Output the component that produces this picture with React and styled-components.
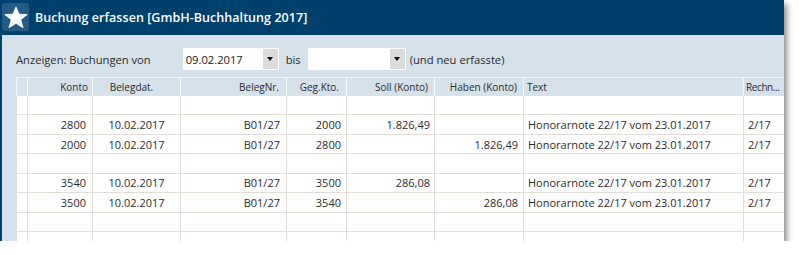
import React from "react";
import styled, { createGlobalStyle } from "styled-components";

const GlobalStyle = createGlobalStyle`
  body {
    margin: 0;
    background: #ffffff;
    font-family: "Open Sans", "Noto Sans", sans-serif;
  }
`;

const COLS = "11px 65px 88px 106px 60px 88px 89px 220px 40px";

const Window = styled.div`
  width: 784px;
  height: 241px;
  display: flex;
  flex-direction: column;
  overflow: hidden;
  border-left: 2px solid #00406c;
  box-sizing: border-box;
  box-shadow: 3px 4px 6px rgba(0, 0, 0, 0.45);
  background: #d5e1eb;
`;

const TitleBar = styled.div`
  height: 35px;
  flex: 0 0 35px;
  background: #00406c;
  display: flex;
  align-items: center;
  gap: 6px;
`;

const IconBox = styled.div`
  width: 27px;
  height: 28px;
  margin-top: -1px;
  border-radius: 3px;
  background: #235b85;
  display: flex;
  align-items: center;
  justify-content: center;
`;

const Title = styled.span`
  color: #ffffff;
  font-size: 12.5px;
  font-weight: 600;
  letter-spacing: 0.05px;
`;

const Body = styled.div`
  flex: 1;
  padding: 13px 0 0 14px;
  display: flex;
  flex-direction: column;
  gap: 7px;
`;

const FilterRow = styled.div`
  display: flex;
  align-items: center;
  height: 22px;
  font-size: 11.2px;
  color: #2b2b2b;
`;

const Label = styled.span`
  margin-right: ${(p) => p.$gap || 0}px;
`;

const Combo = styled.div`
  width: ${(p) => p.$width}px;
  height: 22px;
  box-sizing: border-box;
  background: #fff;
  display: flex;
  align-items: center;
  justify-content: space-between;
  padding: 1px 1px 1px 3px;
  margin-right: ${(p) => p.$gap}px;
  font-size: 11.2px;
  color: #222;
`;

const ComboButton = styled.div`
  width: 15px;
  height: 20px;
  background: #dcdcdc;
  display: flex;
  align-items: center;
  justify-content: center;
  &::after {
    content: "";
    border-left: 3.5px solid transparent;
    border-right: 3.5px solid transparent;
    border-top: 4px solid #111;
  }
`;

const Table = styled.div`
  display: flex;
  flex-direction: column;
  background: #fff;
  font-size: 11px;
  color: #2b2b2b;
`;

const HeadRow = styled.div`
  display: grid;
  grid-template-columns: ${COLS};
  height: 19px;
  background: #d5e1eb;
  border-top: 1px solid #f2f6f9;
  box-sizing: border-box;
`;

const HeadCell = styled.div`
  font-size: 10px;
  color: #2b2b2b;
  display: flex;
  align-items: center;
  justify-content: ${(p) => p.$align || "flex-start"};
  padding: 0 ${(p) => p.$pr ?? 4}px 0 ${(p) => p.$pl ?? 4}px;
  border-left: 1px solid #f4f7fa;
  white-space: nowrap;
  min-width: 0;
  letter-spacing: ${(p) => (p.$tight ? "-0.4px" : "normal")};
`;

const Row = styled.div`
  display: grid;
  grid-template-columns: ${COLS};
  height: 19.45px;
  box-sizing: border-box;
  border-bottom: 1px solid #e2ddd6;
`;

const Cell = styled.div`
  display: flex;
  align-items: center;
  justify-content: ${(p) => p.$align || "flex-start"};
  padding: 0 ${(p) => p.$pr ?? 4}px 0 ${(p) => p.$pl ?? 4}px;
  border-left: 1px solid #e2ddd6;
  white-space: nowrap;
  overflow: hidden;
`;

const Star = () => (
  <svg width="24" height="23" viewBox="0 0 24 23">
    <path
      d="M12 0.8 L15 8.2 L23.2 8.6 L16.8 13.7 L19 21.8 L12 17.3 L5 21.8 L7.2 13.7 L0.8 8.6 L9 8.2 Z"
      fill="#ffffff"
      stroke="#ffffff"
      strokeWidth="0.8"
      strokeLinejoin="round"
    />
  </svg>
);

const columns = [
  { key: "sel", label: "" },
  { key: "konto", label: "Konto", align: "flex-end", hpr: 4, pr: 6 },
  { key: "datum", label: "Belegdat.", align: "center", hpl: 0, hpr: 10 },
  { key: "nr", label: "BelegNr.", align: "flex-end", hpr: 7, pr: 6 },
  { key: "geg", label: "Geg.Kto.", align: "flex-end", hpr: 7, pr: 5 },
  { key: "soll", label: "Soll (Konto)", align: "flex-end", hpr: 6, pr: 4 },
  { key: "haben", label: "Haben (Konto)", align: "flex-end", hpr: 6, pr: 5 },
  { key: "text", label: "Text", hpl: 3, pl: 4 },
  { key: "rechn", label: "Rechn...", hpl: 2, hpr: 0, pl: 4, tight: true },
];

const rows = [
  null,
  { konto: "2800", datum: "10.02.2017", nr: "B01/27", geg: "2000", soll: "1.826,49", text: "Honorarnote 22/17 vom 23.01.2017", rechn: "2/17" },
  { konto: "2000", datum: "10.02.2017", nr: "B01/27", geg: "2800", haben: "1.826,49", text: "Honorarnote 22/17 vom 23.01.2017", rechn: "2/17" },
  null,
  { konto: "3540", datum: "10.02.2017", nr: "B01/27", geg: "3500", soll: "286,08", text: "Honorarnote 22/17 vom 23.01.2017", rechn: "2/17" },
  { konto: "3500", datum: "10.02.2017", nr: "B01/27", geg: "3540", haben: "286,08", text: "Honorarnote 22/17 vom 23.01.2017", rechn: "2/17" },
  null,
  null,
];

export default function App() {
  return (
    <>
      <GlobalStyle />
      <Window>
        <TitleBar>
          <IconBox>
            <Star />
          </IconBox>
          <Title>Buchung erfassen [GmbH-Buchhaltung 2017]</Title>
        </TitleBar>
        <Body>
          <FilterRow>
            <Label $gap={32}>Anzeigen: Buchungen von</Label>
            <Combo $width={96} $gap={7}>
              <span>09.02.2017</span>
              <ComboButton />
            </Combo>
            <Label $gap={7}>bis</Label>
            <Combo $width={98} $gap={4}>
              <span />
              <ComboButton />
            </Combo>
            <Label>(und neu erfasste)</Label>
          </FilterRow>
          <Table>
            <HeadRow>
              {columns.map((c) => (
                <HeadCell
                  key={c.key}
                  $align={c.align}
                  $pl={c.hpl}
                  $pr={c.hpr}
                  $tight={c.tight}
                >
                  {c.label}
                </HeadCell>
              ))}
            </HeadRow>
            {rows.map((r, i) => (
              <Row key={i}>
                {columns.map((c) => (
                  <Cell key={c.key} $align={c.align} $pl={c.pl} $pr={c.pr}>
                    {r && r[c.key]}
                  </Cell>
                ))}
              </Row>
            ))}
          </Table>
        </Body>
      </Window>
    </>
  );
}
